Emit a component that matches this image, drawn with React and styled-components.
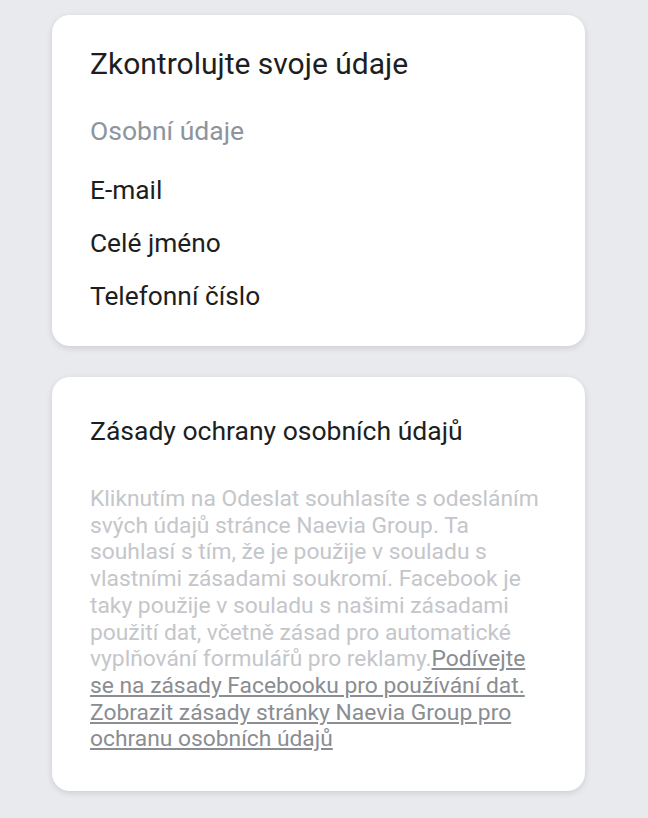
import React from "react";
import styled, { createGlobalStyle } from "styled-components";

const Global = createGlobalStyle`
  html, body {
    margin: 0;
    padding: 0;
    background: #e9eaee;
    font-family: Roboto, "Liberation Sans", sans-serif;
  }
`;

const Page = styled.div`
  display: flex;
  flex-direction: column;
  gap: 31px;
  padding: 15px 63px 27px 52px;
`;

const Card = styled.div`
  background: #ffffff;
  border-radius: 18px;
  box-shadow: 0 2px 6px rgba(0, 0, 0, 0.12);
  padding: ${props => props.pad};
  display: flex;
  flex-direction: column;
`;

const Title = styled.h1`
  margin: 0;
  font-size: 30px;
  font-weight: 400;
  line-height: 36px;
  color: #1c1e21;
`;

const Section = styled.div`
  margin-top: 33px;
  font-size: 26.5px;
  line-height: 32px;
  color: #8d949e;
`;

const Item = styled.div`
  font-size: 26.3px;
  line-height: 32px;
  color: #1c1e21;
  margin-top: ${props => (props.first ? "27px" : "21px")};
`;

const PolicyTitle = styled.h2`
  margin: 0;
  font-size: 26.5px;
  font-weight: 400;
  line-height: 32px;
  color: #1c1e21;
`;

const Paragraph = styled.p`
  margin: 39px 0 0;
  font-size: 22.8px;
  line-height: 26.7px;
  color: #c4c6ca;
`;

const Link = styled.a`
  color: #8a8d91;
  text-decoration: underline;
  text-underline-offset: 2px;
`;

const App = () => {
  return (
    <Page>
      <Global />
      <Card pad="31px 38px 34px 38px">
        <Title>Zkontrolujte svoje údaje</Title>
        <Section>Osobní údaje</Section>
        <Item first>E-mail</Item>
        <Item>Celé jméno</Item>
        <Item>Telefonní číslo</Item>
      </Card>
      <Card pad="38px 38px 38px 38px">
        <PolicyTitle>Zásady ochrany osobních údajů</PolicyTitle>
        <Paragraph>
          Kliknutím na Odeslat souhlasíte s odesláním svých údajů stránce
          Naevia Group. Ta souhlasí s tím, že je použije v souladu s vlastními
          zásadami soukromí. Facebook je taky použije v souladu s našimi
          zásadami použití dat, včetně zásad pro automatické vyplňování
          formulářů pro reklamy.
          <Link>
            Podívejte se na zásady Facebooku pro používání dat.
          </Link>{" "}
          <Link>
            Zobrazit zásady stránky Naevia Group pro ochranu osobních údajů
          </Link>
        </Paragraph>
      </Card>
    </Page>
  );
};

export default App;
